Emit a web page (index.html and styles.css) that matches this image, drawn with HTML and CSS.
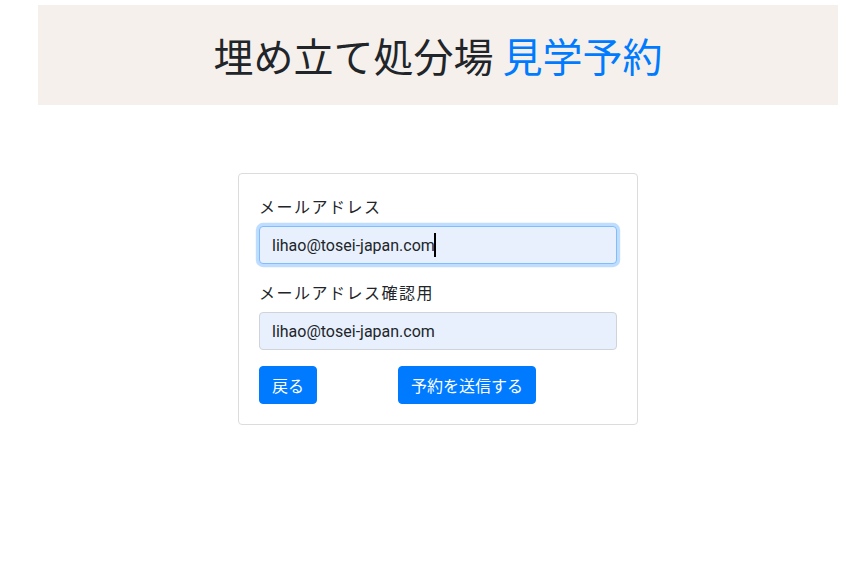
FILE: index.html
```html
<!DOCTYPE html>
<html lang="ja">
<head>
<meta charset="utf-8">
<title>埋め立て処分場 見学予約</title>
<link rel="stylesheet" href="styles.css">
</head>
<body>
<header class="banner">
  <h1 class="banner-title">埋め立て処分場 <span class="accent">見学予約</span></h1>
</header>
<main class="main">
  <form class="card">
    <div class="form-group">
      <label class="form-label" for="email">メールアドレス</label>
      <div class="field">
        <input class="form-control is-focused" id="email" type="text" value="lihao@tosei-japan.com">
        <span class="caret"></span>
      </div>
    </div>
    <div class="form-group">
      <label class="form-label" for="email2">メールアドレス確認用</label>
      <div class="field">
        <input class="form-control" id="email2" type="text" value="lihao@tosei-japan.com">
      </div>
    </div>
    <div class="actions">
      <button type="button" class="btn">戻る</button>
      <button type="button" class="btn">予約を送信する</button>
    </div>
  </form>
</main>
</body>
</html>
```

FILE: styles.css
```css
* { box-sizing: border-box; }
html, body { margin: 0; padding: 0; background: #fff; }
body {
  padding-left: 8px;
  font-family: "Noto Sans", "Noto Sans CJK JP", sans-serif;
  font-size: 16px;
  line-height: 1.5;
  color: #212529;
}
.banner {
  width: 800px;
  height: 100px;
  margin: 5px auto 0;
  background: #f5f0eb;
  display: flex;
  align-items: center;
  justify-content: center;
}
.banner-title {
  margin: 0;
  font-family: "Noto Sans CJK JP", sans-serif;
  font-weight: 400;
  font-size: 40px;
  line-height: 1.2;
  color: #212529;
}
.accent { color: #007bff; }
.main {
  display: flex;
  justify-content: center;
  padding-top: 68px;
}
.card {
  width: 400px;
  border: 1px solid #dcdcdc;
  border-radius: 4px;
  padding: 20px;
  background: #fff;
}
.form-group { margin-bottom: 16px; }
.form-label {
  display: block;
  margin-bottom: 8px;
  font-family: "Noto Sans CJK JP", sans-serif;
  line-height: 24px;
  letter-spacing: 1.5px;
}
.field { position: relative; }
.form-control {
  display: block;
  width: 100%;
  height: 38px;
  padding: 6px 12px;
  font-family: Roboto, "Noto Sans", sans-serif;
  font-size: 16px;
  line-height: 24px;
  color: #212529;
  background: #e8f0fe;
  border: 1px solid #ced4da;
  border-radius: 4px;
  outline: none;
}
.form-control.is-focused {
  border-color: #80bdff;
  box-shadow: 0 0 0 3.2px rgba(0, 123, 255, 0.25);
}
.caret {
  position: absolute;
  left: 175px;
  top: 7px;
  width: 2px;
  height: 24px;
  background: #000;
}
.actions {
  display: flex;
  gap: 81px;
}
.btn {
  font-family: "Noto Sans CJK JP", sans-serif;
  font-size: 16px;
  line-height: 24px;
  padding: 6px 12px;
  color: #fff;
  background: #007bff;
  border: 1px solid #007bff;
  border-radius: 4px;
  cursor: pointer;
}
```
